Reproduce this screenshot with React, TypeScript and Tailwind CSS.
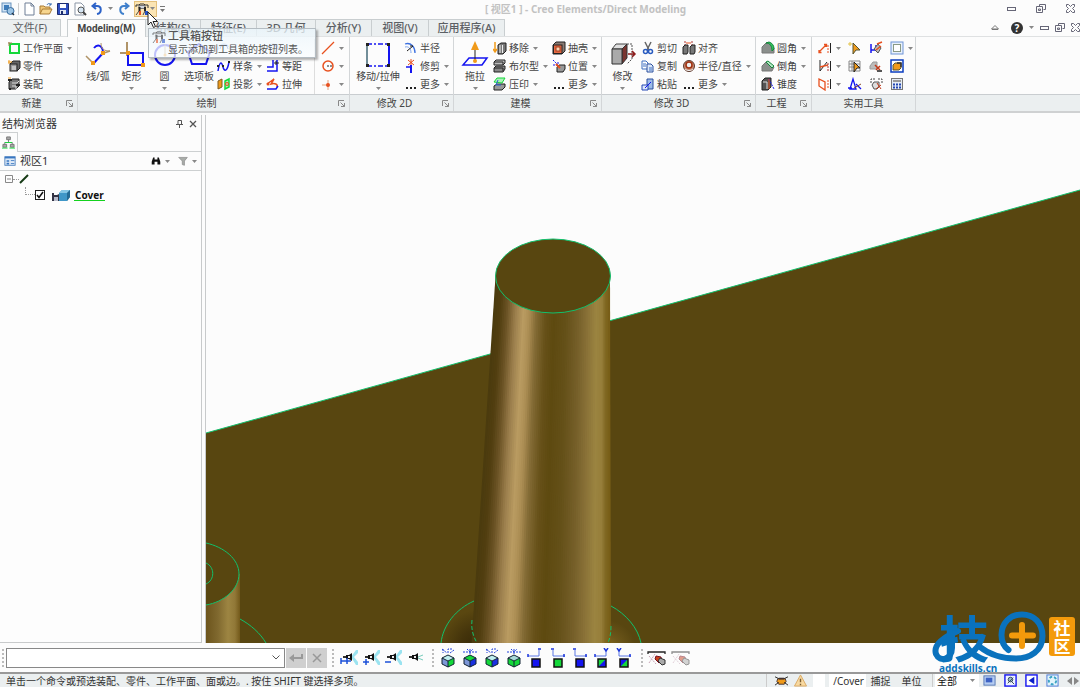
import type { ReactNode } from "react";
import clsx from "clsx";

const BLUE = "#1414f0";
const DARK = "#222";
const ORANGE = "#f09a1a";
const RED = "#e8501e";
const GREEN = "#14d83a";

const box3d = (
  <>
    <path d="M3 5 6 2h7v7l-3 3" fill="#666" stroke={DARK} />
    <rect x="3" y="5" width="7" height="7" fill="#999" stroke={DARK} />
  </>
);

const icons: Record<string, ReactNode> = {
  app: (
    <>
      <rect x="1" y="1" width="9" height="9" fill="#cfe3f5" stroke="#6a93bd" />
      <path d="M3 3h5v5H3z" fill="#3f7dbb" />
      <circle cx="9.500" cy="9" r="3.500" fill="#9cc4e4" stroke="#3a6da0" />
      <path d="m11 11 2 2" stroke="#234" strokeWidth="1.500" />
    </>
  ),
  newFile: <path d="M3 1h6l3 3v9H3zM9 1v3h3" fill="#fff" stroke="#6f7f96" />,
  open: (
    <>
      <path d="M1 12V4h4l1 1h5v2" fill="#f2c878" stroke="#a87a34" />
      <path d="m1 12 2.500-5H13l-2.500 5z" fill="#f7d68f" stroke="#a87a34" />
      <path d="M8 3c1-2 3-2 4 0M12 1v2h-2" stroke="#3b6fb2" />
    </>
  ),
  save: (
    <>
      <path d="M1.500 1.500h11v11h-11z" fill="#2f4fc0" stroke="#1c2c70" />
      <path d="M4 2h6v4H4z" fill="#fff" />
      <path d="M4 8h6v4H4z" fill="#dfe6f2" />
      <path d="M5 9h2v3H5z" fill="#1c2c70" />
    </>
  ),
  preview: (
    <>
      <path d="M2 1h6l3 3v9H2z" fill="#fff" stroke="#8a95a5" />
      <circle cx="8" cy="8" r="3" fill="#d5e5f3" stroke="#555" />
      <path d="m10 10 3 3" stroke="#444" strokeWidth="2" />
    </>
  ),
  undo: <path d="M7 12c5-1 5-8 0-8H3M6 1 2.500 4 6 7" stroke="#2c62c8" strokeWidth="2" />,
  redo: <path d="M7 12C2 11 2 4 7 4h4M8 1l3.500 3L8 7" stroke="#4080cc" strokeWidth="2" />,
  toolbox: (
    <>
      <path d="M1 5V3h3l1-1h4l1 1h3v3" stroke="#333" />
      <path d="M4 3.500h6v3H4z" fill="#cfd6de" stroke="#777" />
      <path d="M4.500 5v4M10 5v4" stroke="#222" strokeWidth="2" />
      <path d="M4 9h2v4H4z" fill={RED} />
      <path d="M10 9h3v4h-3z" fill="#2552c8" />
      <path d="m1 13 3-4M10 9l-2 4" stroke="#444" />
    </>
  ),
  workplane: (
    <>
      <rect x="3" y="3" width="9" height="9" stroke={GREEN} strokeWidth="2" />
      <path d="M1 2h4M2 1v4" stroke="#a58458" />
    </>
  ),
  part: (
    <>
      {box3d}
      <path d="M1 3h4M2 1v4" stroke={ORANGE} />
      <path d="M6 7v4M8 7v4" stroke="#eee" />
    </>
  ),
  assembly: (
    <>
      <path d="M2 5l3-3h7v7l-3 3H2z" fill="#777" stroke={DARK} />
      <path d="M5 6h5l2-2M5 9h4v3" stroke="#ddd" />
      <path d="M1 3h4M9 8h4M2 12h2" stroke={DARK} strokeWidth="2" />
      <path d="M1 1h3" stroke={ORANGE} />
    </>
  ),
  spline: (
    <>
      <path d="M1 12C3 0 5 4 6 8s4 6 6-5" stroke={BLUE} strokeWidth="1.500" />
      <path d="M0 7h2M5 7h2M11 3h2" stroke={DARK} strokeWidth="2" />
    </>
  ),
  project: (
    <>
      <path d="m1 4 4-2v8l-4 2z" fill={ORANGE} stroke="#7c5a20" />
      <path d="m8 4 4-2v8l-4 2z" fill="#b4f0bd" stroke={GREEN} strokeWidth="1.500" />
      <circle cx="10" cy="7" r="1.500" stroke={RED} />
    </>
  ),
  offset: (
    <>
      <path d="M1 8h6V1M1 12h10V1" stroke={BLUE} strokeWidth="1.500" />
      <path d="M8 4h5M10 2v4" stroke={DARK} />
    </>
  ),
  stretch: (
    <>
      <path d="m1 7 7-5-3 5c4-1 7 0 6 3" stroke={RED} strokeWidth="1.500" />
      <path d="M1 12h9l2-3" stroke={BLUE} strokeWidth="1.500" />
      <circle cx="2" cy="7" r="1.500" fill={RED} />
    </>
  ),
  concentric: (
    <>
      <path d="M3 8a4 4 0 0 1 8 0" stroke="#2a62d8" />
      <path d="M1 9a6 6 0 0 1 12 0" stroke="#88aef0" />
    </>
  ),
  line: <path d="M1 13 13 1" stroke={RED} strokeWidth="1.300" />,
  circleIcon: (
    <>
      <circle cx="7" cy="7" r="5" stroke={RED} strokeWidth="1.500" />
      <path d="M6 7h6" stroke={DARK} strokeDasharray="2 1" />
    </>
  ),
  pointIcon: (
    <>
      <path d="M1 8h6v5M7 3v4" stroke="#e2a27c" />
      <circle cx="7" cy="8" r="2" fill={RED} />
    </>
  ),
  radius: (
    <>
      <path d="M1 3c6-2 10 3 10 9" stroke="#3b70e0" strokeWidth="1.300" />
      <path d="M1 6c4-1 6 2 6 6" stroke="#7aa3ee" />
      <path d="m3 10 6-5M9 5H6" stroke={DARK} />
    </>
  ),
  trim: (
    <>
      <path d="M2 8h5" stroke={BLUE} strokeWidth="1.500" />
      <path d="M7 6v8" stroke={BLUE} strokeWidth="2" />
      <path d="m4 1 6 5M10 1 4 6M7 0v6" stroke={RED} />
    </>
  ),
  dots: <path d="M2 11h2M6 11h2M10 11h2" stroke={DARK} strokeWidth="2" />,
  remove: (
    <>
      <path d="m5 4 3-2h5v8l-3 3H5z" fill="#777" stroke={DARK} />
      <path d="M7 4v8M9.500 4v8" stroke="#eee" />
      <path d="M2 1v9M0 8l2 3 2-3" stroke={ORANGE} strokeWidth="1.500" />
    </>
  ),
  bool: (
    <>
      <path d="m1 3 2-2h9v3l-2 2H1z" fill="#bbb" stroke={DARK} />
      <path d="m1 9 2-2h9v3l-2 3H1z" fill="#888" stroke={DARK} />
      <path d="M1 3h9v3M1 9h9v3" stroke={DARK} />
    </>
  ),
  imprint: (
    <>
      <path d="m1 9 3-2h8v3l-3 3H1z" fill="#999" stroke={DARK} />
      <path d="m1 5 3-4h8L9 6z" fill="#aef1bb" stroke={GREEN} />
      <path d="M5 3 3 8h5" stroke="#2a62d8" />
    </>
  ),
  shell: (
    <>
      <path d="m1 4 3-3h9v9l-3 3H1z" fill="#8a7a72" stroke={DARK} />
      <rect x="1.500" y="4" width="8.500" height="8.500" fill="#e86b44" stroke={DARK} />
      <rect x="4" y="6" width="4" height="4" fill="#fbd4b2" stroke="#a13a1a" />
    </>
  ),
  position: (
    <>
      <path d="m1 1 5 5M1 6h5V2" stroke={BLUE} strokeDasharray="2 1" />
      <path d="m5 8 2-2h6v4l-2 3H5z" fill="#999" stroke={DARK} />
      <path d="m4 5 4 4" stroke={RED} strokeWidth="2" />
    </>
  ),
  cut: (
    <>
      <path d="m4 1 4 8M10 1 6 9" stroke="#666" strokeWidth="1.500" />
      <circle cx="4.500" cy="10.500" r="2" stroke="#2a5cc0" strokeWidth="1.500" />
      <circle cx="9.500" cy="10.500" r="2" stroke="#2a5cc0" strokeWidth="1.500" />
    </>
  ),
  copy: (
    <>
      <path d="M1 2h4l2 2v6H1z" fill="#fff" stroke="#3d6ec0" />
      <path d="M6 5h4l2 2v6H6z" fill="#dce8fa" stroke="#2a4f9c" />
      <path d="M2 5h3M2 7h3M8 9h3M8 11h3" stroke="#3d6ec0" />
    </>
  ),
  paste: (
    <>
      <path d="M6 2h6v10H6z" fill="#9dbbe8" stroke="#2a4f9c" />
      <path d="M1 8h6v5H1z" fill="#dce8fa" stroke="#2448b4" />
      <path d="m4 11 6-6" stroke={BLUE} />
    </>
  ),
  align: (
    <>
      <path d="M3 0v13M10 0v13" stroke="#a33" strokeDasharray="2 1" />
      <path d="M1 6 3 4h3v7l-1 2H1zM8 6l2-2h3v7l-1 2H8z" fill="#777" stroke={DARK} />
      <path d="M4 2h5" stroke={RED} />
    </>
  ),
  diameter: (
    <>
      <circle cx="7" cy="7" r="5.500" fill="#c98a70" stroke="#5a3a30" />
      <circle cx="7" cy="6" r="3" fill="#eee" stroke="#9e3010" strokeWidth="1.500" />
      <path d="M3 10c2 2 6 2 8 0" stroke="#eee" />
    </>
  ),
  fillet: (
    <>
      <path d="M1 6 5 2h4l4 5v5H1z" fill="#8b8f8c" stroke="#777" />
      <path d="M5 2c4 0 6 3 6 8l2-2c0-4-2-6-5-7z" fill="#35c45e" stroke="#13863a" />
    </>
  ),
  chamfer: (
    <>
      <path d="m1 7 4-4 8 5-2 4H1z" fill="#8b8f8c" stroke="#777" />
      <path d="m5 3 6 6 2-2-6-5z" fill="#b5e6c4" stroke="#13863a" />
    </>
  ),
  taper: (
    <>
      <path d="m1 4 3-3h6v9l-3 3H1z" fill="#555" stroke={DARK} />
      <path d="M2 5h4v7" stroke="#ddd" />
      <path d="m8 2 5 10" stroke={BLUE} strokeDasharray="2 1" />
      <path d="M8 2v10" stroke={RED} />
    </>
  ),
  measure: (
    <>
      <path d="m1 11 7-7M1 9v2.500h2.500M6 3.500h2.500V6" stroke={RED} strokeWidth="1.300" />
      <path d="M10 4v8" stroke={RED} strokeDasharray="2 1" />
      <path d="M12.500 2v10" stroke={DARK} />
    </>
  ),
  measureAngle: (
    <>
      <path d="M2 1v11L9 3" stroke={DARK} />
      <path d="m2 8 8-2" stroke={RED} strokeWidth="1.300" />
      <path d="M10 4v8" stroke="#a33" strokeDasharray="2 1" />
      <path d="M12.500 2v10" stroke={DARK} />
    </>
  ),
  measureFace: (
    <>
      <path d="M1 2v7l6 4V5z" stroke={RED} strokeWidth="1.300" />
      <path d="M10 3v9" stroke={RED} strokeDasharray="2 1" />
      <path d="M12.500 2v10" stroke={DARK} />
    </>
  ),
  pick: (
    <>
      <path d="m5 2 7 7H8l-3 4z" fill={ORANGE} stroke="#553" />
      <path d="M2 1v4M0 3h4" stroke="#e4c344" />
    </>
  ),
  pickBox: (
    <>
      <path d="M1 2h11v10H1zM1 5h11M1 8h11M4 2v10" stroke="#888" />
      <path d="m6 3 6 6H9l-3 4z" fill={ORANGE} stroke={DARK} />
    </>
  ),
  analyze: (
    <>
      <path d="m2 12 3-10 3 10zM0 11h4M8 7l5 5" stroke={BLUE} strokeWidth="1.300" />
      <path d="m6 11 7-4" stroke="#8a4a2a" />
    </>
  ),
  relation: (
    <>
      <path d="M2 3v9M2 9h5V4" stroke={BLUE} strokeWidth="1.500" />
      <path d="m5 8 4-5 3 4-3 5z" fill="#bbb" stroke="#555" />
      <path d="m8 3 5-2M7 9l5-4" stroke={RED} strokeWidth="1.500" />
    </>
  ),
  check3d: (
    <>
      <path d="m1 7 3-4h4v7H1z" fill="#bbb" stroke="#999" />
      <path d="m6 6 5 5M11 7l-4 4" stroke="#c23a1a" strokeWidth="1.500" />
      <path d="M8 12h5" stroke="#555" strokeWidth="2" />
    </>
  ),
  refresh3d: (
    <>
      <path d="M2 6V2h4M9 2h4v4" stroke="#444" strokeDasharray="2 1" />
      <path d="m3 8 2-3h5v5l-2 2H5z" fill="#ddd" stroke="#555" />
      <path d="m8 6 4 6M12 8l-5 4" stroke="#c23a1a" />
    </>
  ),
  frame: (
    <>
      <rect x="1" y="1" width="12" height="12" fill="#e9f1fb" stroke="#6c93d6" />
      <rect x="3.500" y="3.500" width="7" height="7" fill="#fff" stroke="#8a9a86" />
    </>
  ),
  modelBox: (
    <>
      <rect x="1" y="1" width="12" height="12" fill="#fff" stroke="#0a3cc0" strokeWidth="1.500" />
      <path d="m3 6 2-2h6v5l-2 2H3z" fill={ORANGE} stroke="#553" />
      <path d="M7 4h4v4" stroke="#333" strokeWidth="1.500" />
    </>
  ),
  table: (
    <>
      <rect x="1.500" y="1.500" width="11" height="11" fill="#e6edf6" stroke="#777" />
      <path d="M3 3h8v2H3z" fill="#999" />
      <path d="M3 7.500h8M3 10.500h8" stroke="#2448b4" strokeWidth="2" strokeDasharray="2 1" />
    </>
  ),
  structure: (
    <>
      <path d="M7 3v4M3 10V7h8v3" stroke="#777" />
      <path d="M5 1h4v3H5zM1 9h4v3H1zM9 9h4v3H9z" fill="#aaa" stroke="#777" />
      <path d="M0 13h6M8 13h6M3 7h8" stroke={GREEN} />
    </>
  ),
  viewList: (
    <>
      <rect x="1" y="2" width="12" height="10" fill="#dfeaf7" stroke="#4a7ebc" />
      <path d="M1 3h12" stroke="#3877c2" strokeWidth="2" />
      <path d="M3 6h3v2H3zM3 9h3v2H3z" fill="#3877c2" />
      <path d="M8 6.500h4M8 10h4" stroke="#3877c2" />
    </>
  ),
  binoculars: <path d="M3 2h2v3h4V2h2l2 6v4H9V8H5v4H1V8z" fill="#111" />,
  filter: <path d="M1 2h12L9 7v6l-3-1V7z" fill="#a9ada9" stroke="#8a8a8a" />,
  gecko: (
    <>
      <path d="M3 5h8l1 3-2 3H4L2 8z" fill={ORANGE} stroke="#433" />
      <path d="M0 3l4 2M14 3l-4 2M0 12l4-3M14 12l-4-3" stroke={DARK} />
      <path d="M4 5h6" stroke="#433" strokeWidth="2" />
    </>
  ),
  warning: (
    <>
      <path d="M7 1 13.500 13H.5z" fill="#f8d9a0" stroke="#d9a860" />
      <path d="M7 5v4M7 10.500v1.500" stroke="#7a5c30" strokeWidth="1.500" />
    </>
  ),
  screen: (
    <>
      <rect x="1" y="2" width="12" height="10" fill="#b5cdf2" stroke="#5577b4" />
      <rect x="3" y="4" width="7" height="5" fill="#3d62c4" />
    </>
  ),
  zoomBox: (
    <>
      <rect x="1" y="1" width="12" height="12" fill="#eef4ff" stroke={BLUE} strokeWidth="1.500" />
      <circle cx="7" cy="6" r="2.500" fill="#9bc" stroke="#345" />
      <path d="m4 10 6-6M8 8l3 3" stroke="#345" />
    </>
  ),
  backBox: (
    <>
      <rect x="1" y="1" width="12" height="12" fill="#fff" stroke={BLUE} strokeWidth="1.500" />
      <path d="M10 3v8L4 7z" fill="#0a1ec8" />
    </>
  ),
  spinBox: (
    <>
      <rect x="1" y="1" width="12" height="12" fill="#e2f4fb" stroke="#4a78d6" />
      <circle cx="7" cy="7" r="4" stroke="#39a3c4" strokeWidth="2" strokeDasharray="3 2" />
    </>
  ),
};

function Icon({ name, className = "size-[14px]" }: { name: string; className?: string }) {
  return (
    <svg viewBox="0 0 14 14" fill="none" className={clsx("shrink-0", className)} aria-hidden="true">
      {icons[name]}
    </svg>
  );
}

function Caret({ className }: { className?: string }) {
  return (
    <svg viewBox="0 0 5 3" className={clsx("h-[3px] w-[5px] shrink-0", className)} aria-hidden="true">
      <path d="M0 0h5L2.500 3z" fill="#888" />
    </svg>
  );
}

function Tool({ icon, label, caret, name }: { icon: string; label?: string; caret?: boolean; name?: string }) {
  return (
    <button type="button" aria-label={label ? undefined : name} className="flex h-[18px] items-center whitespace-nowrap">
      <Icon name={icon} />
      {label && <span className="ml-[2px]">{label}</span>}
      {caret && <Caret className="ml-1" />}
    </button>
  );
}

function Column({ children, className }: { children: ReactNode; className?: string }) {
  return <div className={clsx("flex shrink-0 flex-col items-start", className)}>{children}</div>;
}

function BigTool({
  label,
  caret,
  className,
  children,
}: {
  label: string;
  caret?: boolean;
  className: string;
  children: ReactNode;
}) {
  return (
    <button type="button" className={clsx("flex shrink-0 flex-col items-center whitespace-nowrap", className)}>
      <svg viewBox="0 0 28 28" fill="none" className="mt-[2px] size-7 shrink-0" aria-hidden="true">
        {children}
      </svg>
      <span className="leading-[14px]">{label}</span>
      {caret && <Caret className="mt-1" />}
    </button>
  );
}

function Group({
  title,
  launcher = true,
  className,
  children,
}: {
  title: string;
  launcher?: boolean;
  className: string;
  children: ReactNode;
}) {
  return (
    <section className={clsx("flex shrink-0 flex-col border-r border-[#d3d6d8]", className)}>
      <div className="flex h-[58px] pt-[2px]">{children}</div>
      <div className="flex h-[17px] items-center border-t border-[#c9cdd0] bg-[#ebeff0]">
        <span className="flex-1 text-center">{title}</span>
        {launcher && (
          <button type="button" aria-label={`${title} options`} className="mr-1 ml-[3px]">
            <svg viewBox="0 0 7 7" fill="none" className="size-[7px]" aria-hidden="true">
              <path d="M.5 6V.5H6M2.500 2.500l4 4M6.500 3v3.500H3" stroke="#888" />
            </svg>
          </button>
        )}
      </div>
    </section>
  );
}

function WindowControls({ className }: { className: string }) {
  return (
    <div className={clsx("flex items-center", className)}>
      <button type="button" aria-label="Minimize">
        <svg viewBox="0 0 9 9" fill="none" className="size-[9px]">
          <rect x=".5" y="3.500" width="8" height="3" stroke="#667" />
        </svg>
      </button>
      <button type="button" aria-label="Restore">
        <svg viewBox="0 0 10 9" fill="none" className="h-[9px] w-[10px]">
          <path d="M3.500 2.500v-2h6v5h-2M.5 2.500h6v6h-6zM2.500 5h2v1.500h-2z" stroke="#667" />
        </svg>
      </button>
      <button type="button" aria-label="Close">
        <svg viewBox="0 0 9 9" fill="none" className="size-[9px]">
          <path d="M.5.5h2l2 2 2-2h2v2l-2 2 2 2v2h-2l-2-2-2 2h-2v-2l2-2-2-2z" stroke="#667" />
        </svg>
      </button>
    </div>
  );
}

function TitleBar() {
  return (
    <header className="flex h-[17px] shrink-0 items-center">
      <div className="flex flex-1 items-center gap-[3px] pl-px">
        <Icon name="app" />
        <span className="h-3 w-px bg-[#ccc]" />
        {["newFile", "open", "save", "preview", "undo"].map((name) => (
          <button key={name} type="button" aria-label={name}>
            <Icon name={name} />
          </button>
        ))}
        <Caret className="mx-px" />
        <button type="button" aria-label="redo">
          <Icon name="redo" />
        </button>
        <button
          type="button"
          aria-label="工具箱按钮"
          className="flex h-4 items-center gap-px border border-[#e3c07c] bg-[#fbe5b4] pr-px"
        >
          <Icon name="toolbox" />
          <Caret />
        </button>
        <svg viewBox="0 0 5 6" className="h-[6px] w-[5px]" aria-hidden="true">
          <path d="M0 0h5v1H0zM0 3h5L2.500 6z" fill="#777" />
        </svg>
      </div>
      <h1 className="ml-[90px] text-[10px] font-bold text-[#c2c2c2]">[ 视区1 ] - Creo Elements/Direct Modeling</h1>
      <div className="flex flex-1 justify-end">
        <WindowControls className="gap-5 pr-[5px]" />
      </div>
    </header>
  );
}

const tabs = [
  { label: "结构(S)", width: "w-[55px]" },
  { label: "特征(E)", width: "w-[56px]" },
  { label: "3D 几何", width: "w-[59px]" },
  { label: "分析(Y)", width: "w-[56px]" },
  { label: "视图(V)", width: "w-[57px]" },
  { label: "应用程序(A)", width: "w-[76px]" },
];

function TabBar() {
  return (
    <nav className="mt-[2px] flex h-[18px] shrink-0 items-stretch border-b border-[#dfe1e2] text-[11px] text-[#5c6064]">
      <button type="button" className="w-[61px] border-t border-r border-[#c9ced0] bg-[#ebeff0]">
        文件(F)
      </button>
      <button
        type="button"
        className="-mb-px ml-[6px] w-[79px] border border-b-0 border-[#c9ced0] bg-[#fcfcfc] font-['Roboto',sans-serif] text-[10px] font-bold text-[#444]"
      >
        Modeling(M)
      </button>
      {tabs.map(({ label, width }) => (
        <button
          key={label}
          type="button"
          className={clsx("border-t border-r border-[#c9ced0] bg-[#ebeff0] font-medium", width)}
        >
          {label}
        </button>
      ))}
      <div className="flex flex-1 items-center justify-end">
        <button type="button" aria-label="Collapse ribbon" className="mr-3">
          <svg viewBox="0 0 8 5" fill="none" className="h-[5px] w-2">
            <path d="M.5 4 4 .5 7.500 4zM1 4.500h6" stroke="#777" />
          </svg>
        </button>
        <button
          type="button"
          aria-label="Help"
          className="size-3 rounded-full bg-[#333] text-[10px] leading-3 font-bold text-white"
        >
          ?
        </button>
        <Caret className="mx-[6px]" />
        <WindowControls className="gap-[6px]" />
      </div>
    </nav>
  );
}

function Ribbon() {
  return (
    <div className="flex h-[76px] shrink-0 border-b-2 border-[#cfd1d2] text-[10px] text-[#444]">
      <Group title="新建" className="w-[78px]">
        <Column className="pl-[7px]">
          <Tool icon="workplane" label="工作平面" caret />
          <Tool icon="part" label="零件" />
          <Tool icon="assembly" label="装配" />
        </Column>
      </Group>
      <Group title="绘制" className="w-[272px]">
        <BigTool label="线/弧" className="ml-[3px] w-[34px]">
          <path d="m2 15 7 7M20 12l6-2" stroke="#b09468" strokeWidth="1.500" />
          <path d="m9 23 10-11" stroke={BLUE} strokeWidth="2" />
          <path d="M10 7c4-5 9-2 9 5" stroke={BLUE} strokeWidth="2" />
          <path d="M17 2c0 6 3 8 9 8" stroke="#b09468" />
          <path d="M17 10h4v4h-4zM7 20h4v4H7z" fill={ORANGE} />
        </BigTool>
        <BigTool label="矩形" caret className="w-[33px]">
          <path d="M9 1v14M2 12h10" stroke="#b09468" strokeWidth="2" />
          <rect x="10" y="12" width="15" height="12" stroke={BLUE} strokeWidth="2" />
          <path d="M8 10h4v4H8zM23 22h4v4h-4z" fill={ORANGE} />
        </BigTool>
        <BigTool label="圆" caret className="w-[33px]">
          <circle cx="14" cy="14" r="10" stroke={BLUE} strokeWidth="2" />
          <path d="M14 3v11" stroke="#b09468" />
          <circle cx="14" cy="14" r="1.500" fill={ORANGE} />
        </BigTool>
        <BigTool label="选项板" caret className="w-[36px]">
          <path d="M14 3 25 11l-4 12H7L3 11z" stroke={BLUE} strokeWidth="2" />
        </BigTool>
        <Column>
          <Tool icon="concentric" name="圆弧" />
          <Tool icon="spline" label="样条" caret />
          <Tool icon="project" label="投影" caret />
        </Column>
        <Column className="ml-1">
          <Tool icon="concentric" name="圆角" />
          <Tool icon="offset" label="等距" />
          <Tool icon="stretch" label="拉伸" />
        </Column>
        <Column className="ml-3 border-l border-[#ddd] pl-[6px]">
          <Tool icon="line" name="直线" caret />
          <Tool icon="circleIcon" name="圆心" caret />
          <Tool icon="pointIcon" name="点" caret />
        </Column>
      </Group>
      <Group title="修改 2D" className="w-[104px]">
        <BigTool label="移动/拉伸" caret className="ml-[2px] w-[52px]">
          <path d="M3 3v22" stroke="#456a78" strokeWidth="1.500" />
          <path d="M3 3h22M3 25h22" stroke={BLUE} strokeWidth="1.500" strokeDasharray="5 2 2 2" />
          <path d="M25 3v22" stroke={BLUE} strokeWidth="2" />
          <path d="M2 2h3v3H2zM23 2h3v3h-3zM2 23h3v3H2zM23 23h3v3h-3z" fill={DARK} />
        </BigTool>
        <Column>
          <Tool icon="radius" label="半径" />
          <Tool icon="trim" label="修剪" caret />
          <Tool icon="dots" label="更多" caret />
        </Column>
      </Group>
      <Group title="建模" className="w-[148px]">
        <BigTool label="拖拉" caret className="ml-[3px] w-[36px]">
          <path d="M8 17h18l-5 7H2z" stroke={BLUE} strokeWidth="1.500" />
          <path d="M14 20V3" stroke={DARK} />
          <path d="m14 0 4 9h-8z" fill={ORANGE} />
          <circle cx="14" cy="20" r="2" fill={ORANGE} />
        </BigTool>
        <Column>
          <Tool icon="remove" label="移除" caret />
          <Tool icon="bool" label="布尔型" caret />
          <Tool icon="imprint" label="压印" caret />
        </Column>
        <Column className="ml-1">
          <Tool icon="shell" label="抽壳" caret />
          <Tool icon="position" label="位置" caret />
          <Tool icon="dots" label="更多" caret />
        </Column>
      </Group>
      <Group title="修改 3D" className="w-[154px]">
        <BigTool label="修改" caret className="ml-[2px] w-[37px]">
          <path d="m3 8 4-5h11l-4 5z" fill="#e0e0e0" stroke="#444" />
          <path d="m13 8 5-5v14l-5 6z" fill="#7a3530" stroke="#333" />
          <path d="M3 8h10v15H3z" fill="#aaa" stroke="#333" />
          <path d="M18 3h5v15l-5 5" stroke="#555" strokeDasharray="2 1" />
          <path d="M19 13h7M23 10l3 3-3 3" stroke="#8c1c1c" strokeWidth="1.500" />
        </BigTool>
        <Column>
          <Tool icon="cut" label="剪切" />
          <Tool icon="copy" label="复制" />
          <Tool icon="paste" label="粘贴" />
        </Column>
        <Column className="ml-[5px]">
          <Tool icon="align" label="对齐" />
          <Tool icon="diameter" label="半径/直径" caret />
          <Tool icon="dots" label="更多" caret />
        </Column>
      </Group>
      <Group title="工程" className="w-[56px]">
        <Column className="pl-[5px]">
          <Tool icon="fillet" label="圆角" caret />
          <Tool icon="chamfer" label="倒角" caret />
          <Tool icon="taper" label="锥度" />
        </Column>
      </Group>
      <Group title="实用工具" launcher={false} className="w-[104px]">
        <div className="flex gap-[7px] pl-[6px]">
          <Column>
            <Tool icon="measure" name="测量距离" caret />
            <Tool icon="measureAngle" name="测量角度" caret />
            <Tool icon="measureFace" name="测量面" caret />
          </Column>
          <Column>
            <Tool icon="pick" name="选择" />
            <Tool icon="pickBox" name="框选" />
            <Tool icon="analyze" name="分析" />
          </Column>
          <Column>
            <Tool icon="relation" name="关系" />
            <Tool icon="check3d" name="检查" />
            <Tool icon="refresh3d" name="更新" />
          </Column>
          <Column>
            <Tool icon="frame" name="边框" caret />
            <Tool icon="modelBox" name="模型" />
            <Tool icon="table" name="表格" />
          </Column>
        </div>
      </Group>
      <div className="flex flex-1 flex-col justify-end">
        <div className="h-[17px] border-t border-[#c9cdd0] bg-[#ebeff0]" />
      </div>
    </div>
  );
}

function StructureBrowser() {
  return (
    <aside className="flex w-[202px] shrink-0 flex-col border-r border-b border-[#c8cacb] text-[11px] text-[#333]">
      <div className="flex h-[17px] items-center pr-1 pl-[2px]">
        <h2 className="flex-1">结构浏览器</h2>
        <button type="button" aria-label="Pin" className="mr-[6px]">
          <svg viewBox="0 0 7 8" fill="none" className="h-2 w-[7px]">
            <path d="M2 .5h3.500V4M2 .5V4M0 4.500h7M3.500 5v3" stroke="#555" />
          </svg>
        </button>
        <button type="button" aria-label="Close panel">
          <svg viewBox="0 0 8 8" fill="none" className="size-2">
            <path d="m1 1 6 6M7 1 1 7" stroke="#555" strokeWidth="1.300" />
          </svg>
        </button>
      </div>
      <div className="flex h-[20px] items-stretch border-b border-[#cdd0d1]">
        <button
          type="button"
          aria-label="Structure"
          className="-mb-px flex w-[18px] items-center justify-center border-t border-r border-[#cdd0d1] bg-[#fcfcfc]"
        >
          <Icon name="structure" className="size-[13px]" />
        </button>
      </div>
      <div className="flex h-[19px] items-center border-b border-[#cdd0d1] pr-1 pl-1">
        <Icon name="viewList" className="size-3" />
        <span className="ml-1 flex-1">视区1</span>
        <button type="button" aria-label="Find" className="flex items-center gap-1">
          <Icon name="binoculars" className="size-[10px]" />
          <Caret />
        </button>
        <button type="button" aria-label="Filter" className="ml-2 flex items-center gap-1">
          <Icon name="filter" className="size-[10px]" />
          <Caret />
        </button>
      </div>
      <ul className="flex-1 bg-[#fdfdfd]">
        <li>
          <div className="flex h-4 items-center pl-[5px]">
            <button type="button" aria-label="Collapse">
              <svg viewBox="0 0 8 8" fill="none" className="size-2">
                <path d="M.5.5h7v7h-7zM2 4h4" stroke="#888" />
              </svg>
            </button>
            <span className="w-[6px] border-t border-dotted border-[#999]" />
            <svg viewBox="0 0 10 10" className="size-[10px]" aria-hidden="true">
              <path d="m1 9 8-8" stroke="#153a15" strokeWidth="2" />
            </svg>
          </div>
          <ul>
            <li className="flex h-4 items-center pl-[25px]">
              <span className="mb-2 h-2 w-[10px] border-b border-l border-dotted border-[#999]" />
              <label className="flex items-center">
                <input
                  type="checkbox"
                  defaultChecked
                  className="peer size-[10px] appearance-none border border-[#222] bg-white"
                />
                <svg viewBox="0 0 8 8" fill="none" className="-ml-[9px] hidden size-2 peer-checked:block">
                  <path d="m1 4 2 2.500L7 1" stroke="#111" strokeWidth="1.500" />
                </svg>
                <svg viewBox="0 0 18 12" className="ml-2 h-3 w-[18px]" aria-hidden="true">
                  <path d="M0 4h2v2h3l2-1v7H0z" fill="#334" />
                  <path d="M2 8h4v4H2z" fill="#b9bccb" />
                  <path d="m7 4 3-3h8v7l-3 4H7z" fill="#3f97c8" />
                  <path d="m7 4 3-3h8l-3 3z" fill="#86c7e6" />
                  <path d="m15 4 3-3v7l-3 4z" fill="#246a94" />
                </svg>
                <span className="ml-1 h-3 border-b border-[#14d21e] px-px text-[10px] leading-3 font-bold text-[#111]">
                  Cover
                </span>
              </label>
            </li>
          </ul>
        </li>
      </ul>
    </aside>
  );
}

// Shading across the boss, from its left silhouette (0) to its right one (1).
const shade: [number, number[]][] = [
  [0, [74, 58, 14]],
  [0.06, [82, 62, 16]],
  [0.12, [108, 84, 38]],
  [0.19, [155, 126, 76]],
  [0.26, [186, 156, 98]],
  [0.31, [172, 142, 84]],
  [0.37, [130, 106, 52]],
  [0.45, [102, 80, 24]],
  [0.52, [94, 74, 16]],
  [0.62, [100, 80, 24]],
  [0.72, [116, 94, 40]],
  [0.81, [138, 114, 56]],
  [0.88, [155, 132, 64]],
  [0.93, [150, 126, 58]],
  [0.96, [128, 104, 34]],
  [1, [118, 92, 20]],
];

function shadeAt(t: number) {
  const i = Math.max(1, shade.findIndex(([stop]) => stop >= t));
  const [t0, a] = shade[i - 1];
  const [t1, b] = shade[i];
  const k = (t - t0) / (t1 - t0);
  return `rgb(${a.map((v, n) => Math.round(v + (b[n] - v) * k)).join(",")})`;
}

const STRIPS = 64;
const strips = Array.from({ length: STRIPS }, (_, i) => {
  const a = i / STRIPS;
  const b = Math.min(1, (i + 1.5) / STRIPS);
  const top = (t: number) => 495.5 + t * 114.5;
  const bottom = (t: number) => 471.5 + t * 139.5;
  return {
    points: `${top(a)},276 ${top(b)},276 ${bottom(b)},643 ${bottom(a)},643`,
    fill: shadeAt((i + 0.5) / STRIPS),
  };
});

function Viewport() {
  return (
    <main className="ml-[3px] min-w-0 flex-1 overflow-hidden border-l border-[#c8cacb] bg-[#fcfcfc]">
      <svg viewBox="206 115 874 528" preserveAspectRatio="xMinYMin slice" fill="none" className="size-full">
        <defs>
          <linearGradient id="boss" x1="206" x2="240" y1="0" y2="0" gradientUnits="userSpaceOnUse">
            <stop offset="0" stopColor="#6c541c" />
            <stop offset=".35" stopColor="#80692f" />
            <stop offset=".65" stopColor="#9d8542" />
            <stop offset=".85" stopColor="#917837" />
            <stop offset="1" stopColor="#73591a" />
          </linearGradient>
          <radialGradient id="flareLeft" cx="478" cy="648" r="38" gradientUnits="userSpaceOnUse">
            <stop offset="0" stopColor="#352807" />
            <stop offset=".5" stopColor="#44340b" />
            <stop offset="1" stopColor="#5a4710" />
          </radialGradient>
          <radialGradient id="flareRight" cx="606" cy="650" r="30" gradientUnits="userSpaceOnUse">
            <stop offset="0" stopColor="#8a7024" />
            <stop offset=".5" stopColor="#6c561a" />
            <stop offset="1" stopColor="#584610" />
          </radialGradient>
        </defs>
        <path d="m206 433 874-243v453H206z" fill="#584610" />
        <path d="m206 433 874-243" stroke="#12c06c" />
        <path d="M441 643c2-18 15-34 33-42v42z" fill="url(#flareLeft)" />
        <path d="M441 643c2-18 15-34 33-42" stroke="#12c06c" />
        <path d="M611 606c15 8 27 22 30 37h-30z" fill="url(#flareRight)" />
        <path d="M611 606c15 8 27 22 30 37" stroke="#12c06c" />
        {strips.map(({ points, fill }) => (
          <polygon key={points} points={points} fill={fill} />
        ))}
        <path d="M472 620c-1 9 1 16 5 23M611 626c0 7-1 12-3 17" stroke="#12c06c" strokeDasharray="4 2" />
        <ellipse cx="553" cy="276" rx="57.500" ry="37" fill="#584610" stroke="#12c06c" />
        <path d="M206 574h34v69h-34z" fill="url(#boss)" />
        <path d="M206 543c18 4 33 16 33 31s-15 28-33 31z" fill="#584610" />
        <path d="M206 543c18 4 33 16 33 31s-15 28-33 31M206 563c9 4 9 17 0 21" stroke="#12c06c" />
        <path d="M240 619c11 6 20 14 26 24" stroke="#12c06c" />
      </svg>
    </main>
  );
}

function Grip({ className }: { className?: string }) {
  return <span className={clsx("h-[18px] shrink-0 border-l-2 border-dotted border-[#bbb]", className)} />;
}

const lamps = [
  { name: "Add all", mark: "M1 9v6M1 12h3M4 12h7M7 9v6" },
  { name: "Add", mark: "M1 13h6M4 10v6" },
  { name: "Subtract", mark: "M1 13h6" },
  { name: "Single", mark: "" },
];

const cubes = [
  { name: "View XYZ", left: "#7d97d8", right: GREEN, top: "#bfeef0" },
  { name: "View top", left: "#7d97d8", right: "#1a30e0", top: GREEN },
  { name: "View side", left: GREEN, right: "#1a30e0", top: "#bfeef0" },
  { name: "View back", left: GREEN, right: GREEN, top: "#a8d8d8" },
];

const planes = [
  { name: "Front", axes: "M12 2v6H1", letters: "M11 1h3M1 6v3", left: BLUE, right: BLUE },
  { name: "Bottom", axes: "M4 2v6h12", letters: "M2 1h3M15 6v3", left: GREEN, right: GREEN },
  { name: "Left", axes: "M4 2v6h12", letters: "M2 1h3M15 6v3", left: BLUE, right: BLUE },
  { name: "Diagonal", axes: "M13 3v5H2", letters: "m11 0 2 3 2-3M2 6v3", left: GREEN, right: BLUE },
  { name: "Isometric", axes: "M4 3v5h12", letters: "m2 0 2 3 2-3M15 6v3", left: BLUE, right: GREEN },
];

function CommandBar() {
  return (
    <div className="flex h-[31px] shrink-0 items-center border-b-2 border-[#999] pl-[2px]">
      <Grip />
      <div className="ml-[2px] flex h-5 w-[279px] items-center border border-[#888] bg-white pr-1">
        <input aria-label="Command" className="h-full min-w-0 flex-1 px-1 text-[11px] outline-none" />
        <button type="button" aria-label="History">
          <svg viewBox="0 0 8 5" fill="none" className="h-[5px] w-2">
            <path d="m.5.5 3.500 3.500L7.500.5" stroke="#555" />
          </svg>
        </button>
      </div>
      <button type="button" aria-label="Enter" className="ml-px flex h-5 w-[20px] items-center justify-center bg-[#cfcfcf]">
        <svg viewBox="0 0 14 10" fill="none" className="h-[10px] w-[14px]">
          <path d="M13 1v4H3" stroke="#999" strokeWidth="2" />
          <path d="M5 1v8L0 5z" fill="#999" />
        </svg>
      </button>
      <button type="button" aria-label="Cancel" className="ml-px flex h-5 w-[20px] items-center justify-center bg-[#cfcfcf]">
        <svg viewBox="0 0 10 10" fill="none" className="size-[10px]">
          <path d="m1 1 8 8M9 1 1 9" stroke="#999" strokeWidth="1.500" />
        </svg>
      </button>
      <Grip className="ml-[5px]" />
      <div className="ml-[6px] flex gap-1">
        {lamps.map(({ name, mark }) => (
          <button key={name} type="button" aria-label={name}>
            <svg viewBox="0 0 18 18" fill="none" className="size-[18px]">
              {mark ? (
                <path d="m11 8 5-7h2v3l-4 4 4 5v3h-2z" fill="#9be3f0" />
              ) : (
                <path d="m12 8 5-2M12 9l5 2" stroke="#7cb" />
              )}
              <path d="M3 8h4" stroke="#333" strokeWidth="2" />
              <path d="M6 6h3l3-2v8L9 10H6z" fill="#111" />
              <path d="M8 7h2v2H8z" fill="#eee" />
              <path d={mark} stroke="#1c50d8" strokeWidth="1.500" />
            </svg>
          </button>
        ))}
      </div>
      <Grip className="ml-2" />
      <div className="ml-[5px] flex gap-1">
        {cubes.map(({ name, left, right, top }, i) => (
          <button key={name} type="button" aria-label={name}>
            <svg viewBox="0 0 18 20" fill="none" className="h-5 w-[18px]">
              <path
                d={i % 2 ? "M2 4h14M6 1l3 3 3-3M9 1v5" : "M4 1v4M3 1l5 4M9 5V1h4M11 5l4-3"}
                stroke="#2342dc"
                strokeDasharray="2 1"
              />
              <path d="M3 10v6l6 3v-6z" fill={left} />
              <path d="M15 10v6l-6 3v-6z" fill={right} />
              <path d="m3 10 6-3 6 3-6 3z" fill={top} />
              <path d="m3 10 6-3 6 3v6l-6 3-6-3zM3 10l6 3 6-3M9 13v6" stroke="#123" />
            </svg>
          </button>
        ))}
        {planes.map(({ name, axes, letters, left, right }) => (
          <button key={name} type="button" aria-label={name}>
            <svg viewBox="0 0 18 20" fill="none" className="h-5 w-[18px]">
              <path d={axes} stroke="#5b76e4" />
              <path d={letters} stroke="#1a35dc" strokeWidth="1.500" />
              <path d="M5 11h8v8H5z" fill={right} />
              <path d="M5 11h8l-8 8z" fill={left} />
              <path d="M5 11h8v8H5z" stroke="#111" strokeWidth="1.500" />
            </svg>
          </button>
        ))}
      </div>
      <Grip className="ml-2" />
      <div className="ml-1 flex gap-1">
        {["", "opacity-50"].map((dim) => (
          <button key={dim} type="button" aria-label={dim ? "Hide section" : "Show section"} className={dim}>
            <svg viewBox="0 0 20 18" fill="none" className="h-[18px] w-5">
              <path d="M1 5V3h17v2" stroke="#222" strokeWidth="1.300" />
              <path d="m2 14 6-9M2 7l7 8" stroke="#c9a6b8" strokeDasharray="2 1" />
              <path d="m9 7 5 1 1 4-3 2-4-4z" fill="#c8401c" stroke="#712" />
              <path d="m13 9 5 2v4l-3 1-4-4z" fill="#aaa" stroke="#333" />
            </svg>
          </button>
        ))}
      </div>
    </div>
  );
}

function StatusBar() {
  return (
    <footer className="flex h-[13px] shrink-0 items-center overflow-hidden bg-[#ebeff0] text-[10px] text-[#333]">
      <p className="flex-1 pl-[6px] whitespace-nowrap">
        单击一个命令或预选装配、零件、工作平面、面或边。. 按住 SHIFT 键选择多项。
      </p>
      <span className="h-full w-px bg-[#ccc]" />
      <Icon name="gecko" className="ml-2 size-[13px]" />
      <Icon name="warning" className="ml-[6px] size-[13px]" />
      <span className="ml-[6px] h-full w-3 bg-white" />
      <span className="ml-1 flex h-full w-[37px] items-center justify-end bg-white pr-[2px]">/Cover</span>
      <button type="button" className="ml-1 w-[21px] whitespace-nowrap">
        捕捉
      </button>
      <button type="button" className="ml-[10px] w-[21px] whitespace-nowrap">
        单位
      </button>
      <span className="ml-[10px] h-full w-px bg-[#ccc]" />
      <label className="ml-[2px] flex h-full w-[44px] items-center bg-white pr-1">
        <select aria-label="选择范围" className="min-w-0 flex-1 appearance-none pl-[2px] text-[10px] text-[#111]">
          <option>全部</option>
        </select>
        <Caret />
      </label>
      <div className="ml-1 flex items-center gap-2">
        {["screen", "zoomBox", "backBox", "spinBox"].map((name) => (
          <button key={name} type="button" aria-label={name}>
            <Icon name={name} className="size-[13px]" />
          </button>
        ))}
      </div>
      <svg viewBox="0 0 12 8" className="mr-px ml-2 h-2 w-3" aria-hidden="true">
        <path d="M5 0v8L0 4zM7 0v8l5-4z" fill="#888" />
      </svg>
    </footer>
  );
}

function Tooltip() {
  return (
    <div
      role="tooltip"
      className="absolute top-[28px] left-[148px] flex h-[30px] w-[168px] border border-[#b4bcc2] bg-linear-to-b from-[#eaf5fb]/75 to-[#fafdff]/75 pl-[3px] shadow-[2px_2px_2px_rgba(0,0,0,0.3)]"
    >
      <Icon name="toolbox" className="mt-px size-[14px] opacity-60" />
      <div className="ml-[2px] whitespace-nowrap text-[#555]">
        <p className="text-[11px] leading-[13px] font-medium">工具箱按钮</p>
        <p className="text-[10px] leading-[15px]">显示添加到工具箱的按钮列表。</p>
      </div>
    </div>
  );
}

function Pointer() {
  return (
    <svg viewBox="0 0 12 18" className="absolute top-[11px] left-[147px] h-[18px] w-3" aria-hidden="true">
      <path d="M1 1v13l3-3 2.500 5.500 2-1L6 10.500h4.500z" fill="#fff" stroke="#222" />
    </svg>
  );
}

function Logo() {
  return (
    <div className="absolute right-0 bottom-[12px] h-[66px] w-[148px] text-[#0a72bd]">
      <svg viewBox="0 0 148 66" fill="none" className="size-full" aria-hidden="true">
        <path d="M26 22C12 28 1 36 4 45c4 9 16 5 16-6V24" stroke="currentColor" strokeWidth="6" strokeLinecap="round" />
        <path
          d="M76.500 41C71 37 69.500 32 69.500 26C69.500 14 78 5.500 90 5.500S110.500 14 110.500 27C110.500 42 98 49.500 84 49.500C70 49.500 58 46 48 38"
          stroke="currentColor"
          strokeWidth="6"
          strokeLinecap="round"
        />
        <path d="M90 16v21M80 26.500h21" stroke="#f39a0b" strokeWidth="6" strokeLinecap="round" />
      </svg>
      <span className="absolute top-[2px] left-[7px] font-['Noto_Sans_CJK_SC',sans-serif] text-[50px] leading-[50px] font-bold">
        技
      </span>
      <span className="absolute top-2 right-[5px] flex h-[39px] w-[26px] flex-col items-center justify-center rounded-[3px] bg-[#f39a0b] font-['Noto_Sans_CJK_SC',sans-serif] text-[17px] leading-[18px] font-bold text-white">
        <span>社</span>
        <span>区</span>
      </span>
      <a href="#addskills" className="absolute bottom-0 left-[7px] text-[10px] leading-[14px] font-bold">
        addskills.cn
      </a>
    </div>
  );
}

export default function App() {
  return (
    <div className="relative flex h-screen flex-col overflow-hidden bg-[#fcfcfc] font-['Noto_Sans','Noto_Sans_CJK_SC',sans-serif] leading-[14px]">
      <TitleBar />
      <TabBar />
      <Ribbon />
      <div className="flex min-h-0 flex-1 pt-[2px]">
        <StructureBrowser />
        <Viewport />
      </div>
      <CommandBar />
      <StatusBar />
      <Tooltip />
      <Pointer />
      <Logo />
    </div>
  );
}
